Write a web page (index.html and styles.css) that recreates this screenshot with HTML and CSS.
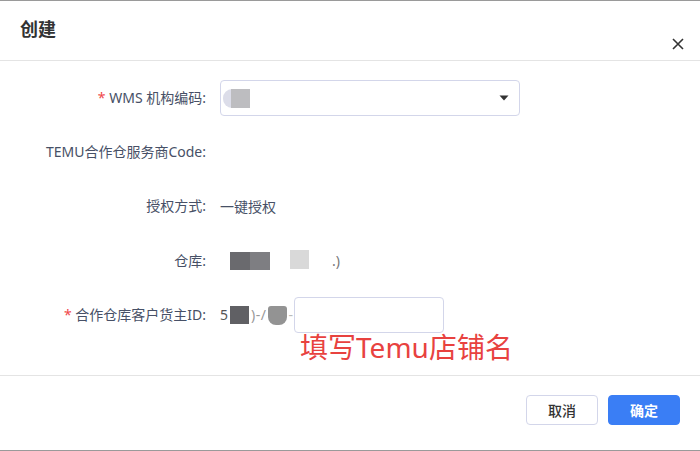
FILE: index.html
```html
<!DOCTYPE html>
<html lang="zh">
<head>
<meta charset="utf-8">
<link rel="stylesheet" href="styles.css">
</head>
<body>
<div class="dialog">
  <div class="header">
    <div class="title">创建</div>
    <svg class="close" width="12" height="12" viewBox="0 0 12 12"><path d="M1 1L11 11M11 1L1 11" stroke="#333" stroke-width="1.6" fill="none"/></svg>
  </div>
  <div class="body">
    <div class="row">
      <div class="label"><span class="req">*</span> WMS 机构编码:</div>
      <div class="content">
        <div class="select">
          <span class="blur b-lav"></span><span class="blur b-gray1"></span>
          <svg class="arrow" width="10" height="6" viewBox="0 0 10 6"><path d="M0.5 0.5H9.5L5 5.5Z" fill="#333"/></svg>
        </div>
      </div>
    </div>
    <div class="row">
      <div class="label">TEMU合作仓服务商Code:</div>
      <div class="content"></div>
    </div>
    <div class="row">
      <div class="label">授权方式:</div>
      <div class="content text">一键授权</div>
    </div>
    <div class="row">
      <div class="label">仓库:</div>
      <div class="content text">
        <span class="blur b-dark1"></span><span class="blur b-dark2"></span><span class="blur b-light"></span><span class="paren">.)</span>
      </div>
    </div>
    <div class="row">
      <div class="label"><span class="req">*</span> 合作仓库客户货主ID:</div>
      <div class="content text">
        <span class="five">5</span><span class="blur b-dark3"></span><span class="mid">)-/</span><span class="blur b-round"></span><span class="dash">-</span>
        <div class="input"></div>
      </div>
    </div>
    <div class="note">填写Temu店铺名</div>
  </div>
  <div class="footer">
    <button class="btn cancel">取消</button>
    <button class="btn ok">确定</button>
  </div>
</div>
</body>
</html>
```
FILE: styles.css
```css
html, body { margin: 0; padding: 0; background: #fff; }
body { font-family: "Noto Sans", "Noto Sans CJK SC", sans-serif; }
.dialog {
  width: 700px; height: 451px; box-sizing: border-box;
  border-top: 1px solid #9a9a9a; border-bottom: 1px solid #9a9a9a;
  display: flex; flex-direction: column;
}
.header {
  height: 59px; border-bottom: 1px solid #e4e4e4;
  position: relative; box-sizing: content-box;
}
.title {
  position: absolute; left: 20px; top: 15px;
  font-size: 18px; font-weight: 700; color: #333; line-height: 26px;
}
.close { position: absolute; right: 16px; top: 37px; }
.body { height: 314px; padding-top: 10px; box-sizing: border-box; position: relative; }
.row { height: 54.2px; display: flex; align-items: center; }
.row:first-child { margin-bottom: 0.5px; }
.label {
  width: 206px; text-align: right; font-size: 14px; color: #475066;
  white-space: nowrap; box-sizing: border-box; line-height: 20px; padding-bottom: 1px;
}
.req { color: #f0484b; }
.content { margin-left: 14px; display: flex; align-items: center; font-size: 14px; color: #475066; line-height: 20px; }
.select {
  width: 300px; height: 36px; box-sizing: border-box;
  border: 1px solid #d3d6ea; border-radius: 4px; position: relative;
  display: flex; align-items: center; padding-left: 2px;
}
.arrow { position: absolute; right: 10px; top: 14px; }
.blur { display: inline-block; }
.b-lav { width: 10px; height: 19px; background: #dcdde9; border-radius: 9px 0 0 9px; }
.b-gray1 { width: 19px; height: 19px; background: #bdbdc0; margin-left: -2px; }
.b-dark1 { width: 20px; height: 18px; background: #6a6a6e; margin-left: 10px; }
.b-dark2 { width: 20px; height: 18px; background: #7e7e82; }
.b-light { width: 19px; height: 19px; background: #d9d9d9; margin-left: 20px; margin-top: -4px; }
.paren { margin-left: 23px; color: #777; }
.five { color: #555; }
.b-dark3 { width: 19px; height: 18px; background: #606064; margin-left: 2px; }
.mid { color: #999; margin-left: 2px; margin-right: 1px; letter-spacing: 0.5px; }
.b-round { width: 19px; height: 19px; background: #939393; border-radius: 3px 3px 8px 8px; margin-left: 1px; }
.dash { color: #bbb; margin-left: 1px; }
.input {
  width: 150px; height: 36px; box-sizing: border-box; margin-left: 1px;
  border: 1px solid #d3d6ea; border-radius: 4px;
}
.note {
  position: absolute; left: 300px; top: 268px;
  font-size: 28px; color: #e8423f; line-height: 36px; white-space: nowrap;
}
.footer {
  flex: 1; border-top: 1px solid #e4e4e4;
  display: flex; justify-content: flex-end; align-items: flex-start;
  padding: 19px 20px 0 0; gap: 10px;
}
.btn {
  width: 72px; height: 30px; border-radius: 4px; font-size: 14px;
  font-family: "Noto Sans", "Noto Sans CJK SC", sans-serif; cursor: pointer;
}
.cancel { background: #fff; border: 1px solid #d3d6ea; color: #333; font-weight: 500; }
.ok { background: #3a7ef5; border: 1px solid #3a7ef5; color: #fff; font-weight: 700; }
```
